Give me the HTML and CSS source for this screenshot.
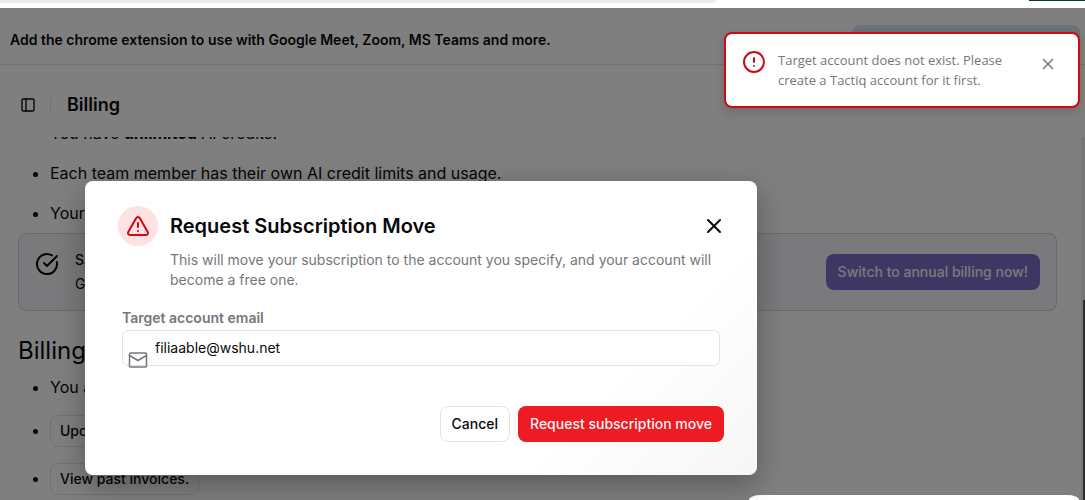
FILE: index.html
```html
<!DOCTYPE html>
<html lang="en">
<head>
  <meta charset="UTF-8" />
  <meta name="viewport" content="width=device-width, initial-scale=1.0"/>
  <title>Billing</title>
  <link rel="stylesheet" href="styles.css">
</head>
<body>

  <div class="browser-strip">
    <div class="strip-bar"></div>
    <div class="strip-accent"></div>
  </div>

  <div class="app">
    <div class="banner">
      <p>Add the chrome extension to use with Google Meet, Zoom, MS Teams and more.</p>
      <div class="banner-action"></div>
    </div>

    <header class="page-header">
      <button class="icon-button" type="button" aria-label="Toggle sidebar">
        <svg width="16" height="16" viewBox="0 0 24 24" fill="none" stroke="currentColor" stroke-width="2" stroke-linecap="round" stroke-linejoin="round"><rect x="3" y="3" width="18" height="18" rx="2"/><path d="M9 3v18"/></svg>
      </button>
      <span class="divider"></span>
      <h1>Billing</h1>
    </header>

    <div class="scroll-area">
      <main>
        <ul class="plan-list">
          <li>You have <strong>unlimited</strong> AI credits.</li>
          <li>Each team member has their own AI credit limits and usage.</li>
          <li>Your</li>
        </ul>

        <section class="promo">
          <svg width="24" height="24" viewBox="0 0 24 24" fill="none" stroke="currentColor" stroke-width="2" stroke-linecap="round" stroke-linejoin="round"><path d="M21.8 10A10 10 0 1 1 17 3.34"/><path d="m9 11 3 3L22 4"/></svg>
          <div class="promo-text">
            <p>Sa</p>
            <p>G</p>
          </div>
          <button class="btn btn-primary" type="button">Switch to annual billing now!</button>
        </section>

        <h2>Billing</h2>
        <ul class="billing-list">
          <li>You a</li>
          <li><button class="btn btn-small" type="button">Update</button></li>
          <li><button class="btn btn-small" type="button">View past invoices.</button></li>
        </ul>
      </main>
      <div class="scrollbar"><div class="scrollbar-thumb"></div></div>
    </div>

    <div class="overlay"></div>
  </div>

  <div class="chat-widget"></div>

  <div class="modal" role="dialog" aria-labelledby="modal-title">
    <div class="modal-header">
      <span class="modal-icon">
        <svg width="24" height="24" viewBox="0 0 24 24" fill="none" stroke="currentColor" stroke-width="2" stroke-linecap="round" stroke-linejoin="round"><path d="m21.73 18-8-14a2 2 0 0 0-3.48 0l-8 14A2 2 0 0 0 4 21h16a2 2 0 0 0 1.73-3"/><path d="M12 9v4"/><path d="M12 17h.01"/></svg>
      </span>
      <h3 id="modal-title">Request Subscription Move</h3>
      <button class="icon-button" type="button" aria-label="Close">
        <svg width="24" height="24" viewBox="0 0 24 24" fill="none" stroke="currentColor" stroke-width="2" stroke-linecap="round"><path d="M18 6 6 18"/><path d="m6 6 12 12"/></svg>
      </button>
    </div>
    <p class="modal-text">This will move your subscription to the account you specify, and your account will become a free one.</p>

    <form class="modal-form">
      <label for="email">Target account email</label>
      <div class="input-wrap">
        <input type="email" id="email" value="filiaable@wshu.net">
        <svg class="mail-icon" width="20" height="20" viewBox="0 0 20 20" fill="none" stroke="currentColor" stroke-width="1.5" stroke-linecap="round" stroke-linejoin="round"><rect x="1.5" y="3" width="17" height="14" rx="1"/><path d="m1.5 5.500 8.500 5 8.500-5"/></svg>
      </div>
      <div class="modal-actions">
        <button class="btn btn-outline" type="button">Cancel</button>
        <button class="btn btn-danger" type="button">Request subscription move</button>
      </div>
    </form>
  </div>

  <div class="toast" role="alert">
    <svg class="toast-icon" width="24" height="24" viewBox="0 0 24 24" fill="none" stroke="currentColor" stroke-width="2" stroke-linecap="round"><circle cx="12" cy="12" r="10"/><path d="M12 8v4"/><path d="M12 16h.01"/></svg>
    <p>Target account does not exist. Please create a Tactiq account for it first.</p>
    <button class="icon-button" type="button" aria-label="Dismiss">
      <svg width="16" height="16" viewBox="0 0 16 16" fill="none" stroke="currentColor" stroke-width="1.5" stroke-linecap="round"><path d="m3.500 3.500 9 9"/><path d="m12.500 3.500-9 9"/></svg>
    </button>
  </div>

</body>
</html>
```

FILE: styles.css
```css
* {
  box-sizing: border-box;
}

body {
  display: flex;
  flex-direction: column;
  height: 100vh;
  margin: 0;
  overflow: hidden;
  position: relative;
  background: white;
  color: #09090b;
  font-family: Inter, sans-serif;
  font-size: 16px;
  line-height: 24px;
}

h1, h2, h3, p, ul {
  margin: 0;
}

svg {
  display: block;
  flex: none;
}

.browser-strip {
  display: flex;
  justify-content: space-between;
  height: 8px;
}

.strip-bar {
  width: 66%;
  height: 3px;
  background: #ececf0;
  border-radius: 0 0 8px 0;
}

.strip-accent {
  width: 56px;
  height: 1px;
  background: #0b3d17;
}

.app {
  display: flex;
  flex-direction: column;
  flex: 1;
  min-height: 0;
  position: relative;
}

.overlay {
  position: absolute;
  inset: 0;
  background: rgba(0, 0, 0, 0.5);
}

.banner {
  display: flex;
  align-items: center;
  justify-content: space-between;
  height: 57px;
  padding: 8px 5px 0 10px;
  border-bottom: 1px solid #e4e4e7;
  font-size: 14px;
  font-weight: 600;
}

.banner-action {
  width: 228px;
  height: 30px;
  border-radius: 8px;
  background: #dbe2f4;
}

.page-header {
  display: flex;
  align-items: center;
  gap: 16px;
  height: 72px;
  padding: 8px 20px 0;
}

.page-header h1 {
  font-size: 18px;
  font-weight: 600;
}

.page-header .icon-button {
  width: 16px;
}

.divider {
  width: 1px;
  height: 16px;
  margin-left: -2px;
  background: #e4e4e7;
}

.icon-button {
  display: flex;
  align-items: center;
  justify-content: center;
  padding: 0;
  border: none;
  background: none;
  color: inherit;
  cursor: pointer;
}

.scroll-area {
  display: flex;
  flex: 1;
  min-height: 0;
  overflow: hidden;
}

main {
  flex: 1;
  margin-top: -16px;
  padding: 0 24px 0 18px;
}

.scrollbar {
  width: 4px;
  padding: 163px 0 0 2px;
  background: #eeeeee;
}

.scrollbar-thumb {
  height: 200px;
  background: #55595e;
}

ul {
  padding-left: 32px;
}

.plan-list li {
  margin-bottom: 16px;
}

.promo {
  display: flex;
  align-items: center;
  gap: 16px;
  margin-top: -8px;
  height: 78px;
  padding: 0 16px;
  border: 1px solid #d4d4dc;
  border-radius: 8px;
  background: #f4f4f8;
  font-size: 14px;
}

.promo svg {
  align-self: flex-start;
  margin-top: 18px;
}

.promo-text {
  flex: 1;
}

.promo-text p:first-child {
  font-weight: 500;
}

h2 {
  margin-top: 24px;
  font-size: 24px;
  font-weight: 400;
  line-height: 32px;
}

.billing-list {
  margin-top: 8px;
}

.billing-list li {
  margin-bottom: 16px;
}

.btn {
  height: 36px;
  padding: 0 11px 1px;
  border: 1px solid transparent;
  border-radius: 8px;
  font-family: inherit;
  font-size: 14px;
  font-weight: 500;
  line-height: 20px;
  cursor: pointer;
}

.btn-primary {
  background: #7c6fc8;
  color: #f4f4f8;
}

.btn-small {
  height: 32px;
  padding: 0 9px 1px;
  border-color: #e4e4e7;
  background: white;
  color: #09090b;
}

.btn-outline {
  border-color: #e4e4e7;
  background: white;
  color: #09090b;
}

.btn-danger {
  background: #ed1b24;
  color: #fef2f2;
}

.modal {
  position: absolute;
  top: 181px;
  left: 85px;
  width: 672px;
  padding: 25px 33px 33px;
  border-radius: 8px;
  background: linear-gradient(135deg, white 75%, #f6f6f6);
  box-shadow: 0 10px 30px rgba(0, 0, 0, 0.3);
}

.modal-header {
  display: flex;
  align-items: center;
  gap: 12px;
}

.modal-header h3 {
  flex: 1;
  font-size: 20px;
  font-weight: 600;
}

.modal-header .icon-button {
  width: 20px;
}

.modal-icon {
  display: flex;
  align-items: center;
  justify-content: center;
  width: 40px;
  height: 40px;
  border-radius: 50%;
  background: #fee2e2;
  color: #cf0a16;
}

.modal-text {
  margin-top: 4px;
  padding-left: 52px;
  color: #76767d;
  font-size: 14px;
  line-height: 20px;
}

.modal-form {
  margin-top: 16px;
  padding-left: 4px;
}

.modal-form label {
  display: block;
  color: #76767d;
  font-size: 14px;
  font-weight: 600;
}

.input-wrap {
  position: relative;
  margin-right: 4px;
}

.input-wrap input {
  display: block;
  width: 100%;
  height: 36px;
  padding: 0 12px 1px 32px;
  border: 1px solid #e4e4e7;
  border-radius: 6px;
  background: white;
  color: #09090b;
  font-family: inherit;
  font-size: 14px;
  outline: none;
}

.mail-icon {
  position: absolute;
  top: 20px;
  left: 6px;
  color: #76767d;
}

.modal-actions {
  display: flex;
  justify-content: flex-end;
  gap: 8px;
  margin-top: 40px;
}

.toast {
  display: flex;
  gap: 12px;
  position: absolute;
  top: 32px;
  right: 5px;
  width: 356px;
  padding: 16px;
  border: 2px solid #cf0a16;
  border-radius: 8px;
  background: white;
  box-shadow: 0 4px 12px rgba(0, 0, 0, 0.15);
  color: #76767d;
}

.toast-icon {
  color: #cf0a16;
}

.toast p {
  flex: 1;
  font-family: "Open Sans", "Noto Sans", sans-serif;
  font-size: 13px;
  line-height: 20px;
}

.toast .icon-button {
  width: 28px;
  height: 28px;
}

.chat-widget {
  position: absolute;
  right: 6px;
  bottom: 0;
  width: 330px;
  height: 5px;
  border-radius: 12px 12px 0 0 / 5px 5px 0 0;
  background: white;
}
```
